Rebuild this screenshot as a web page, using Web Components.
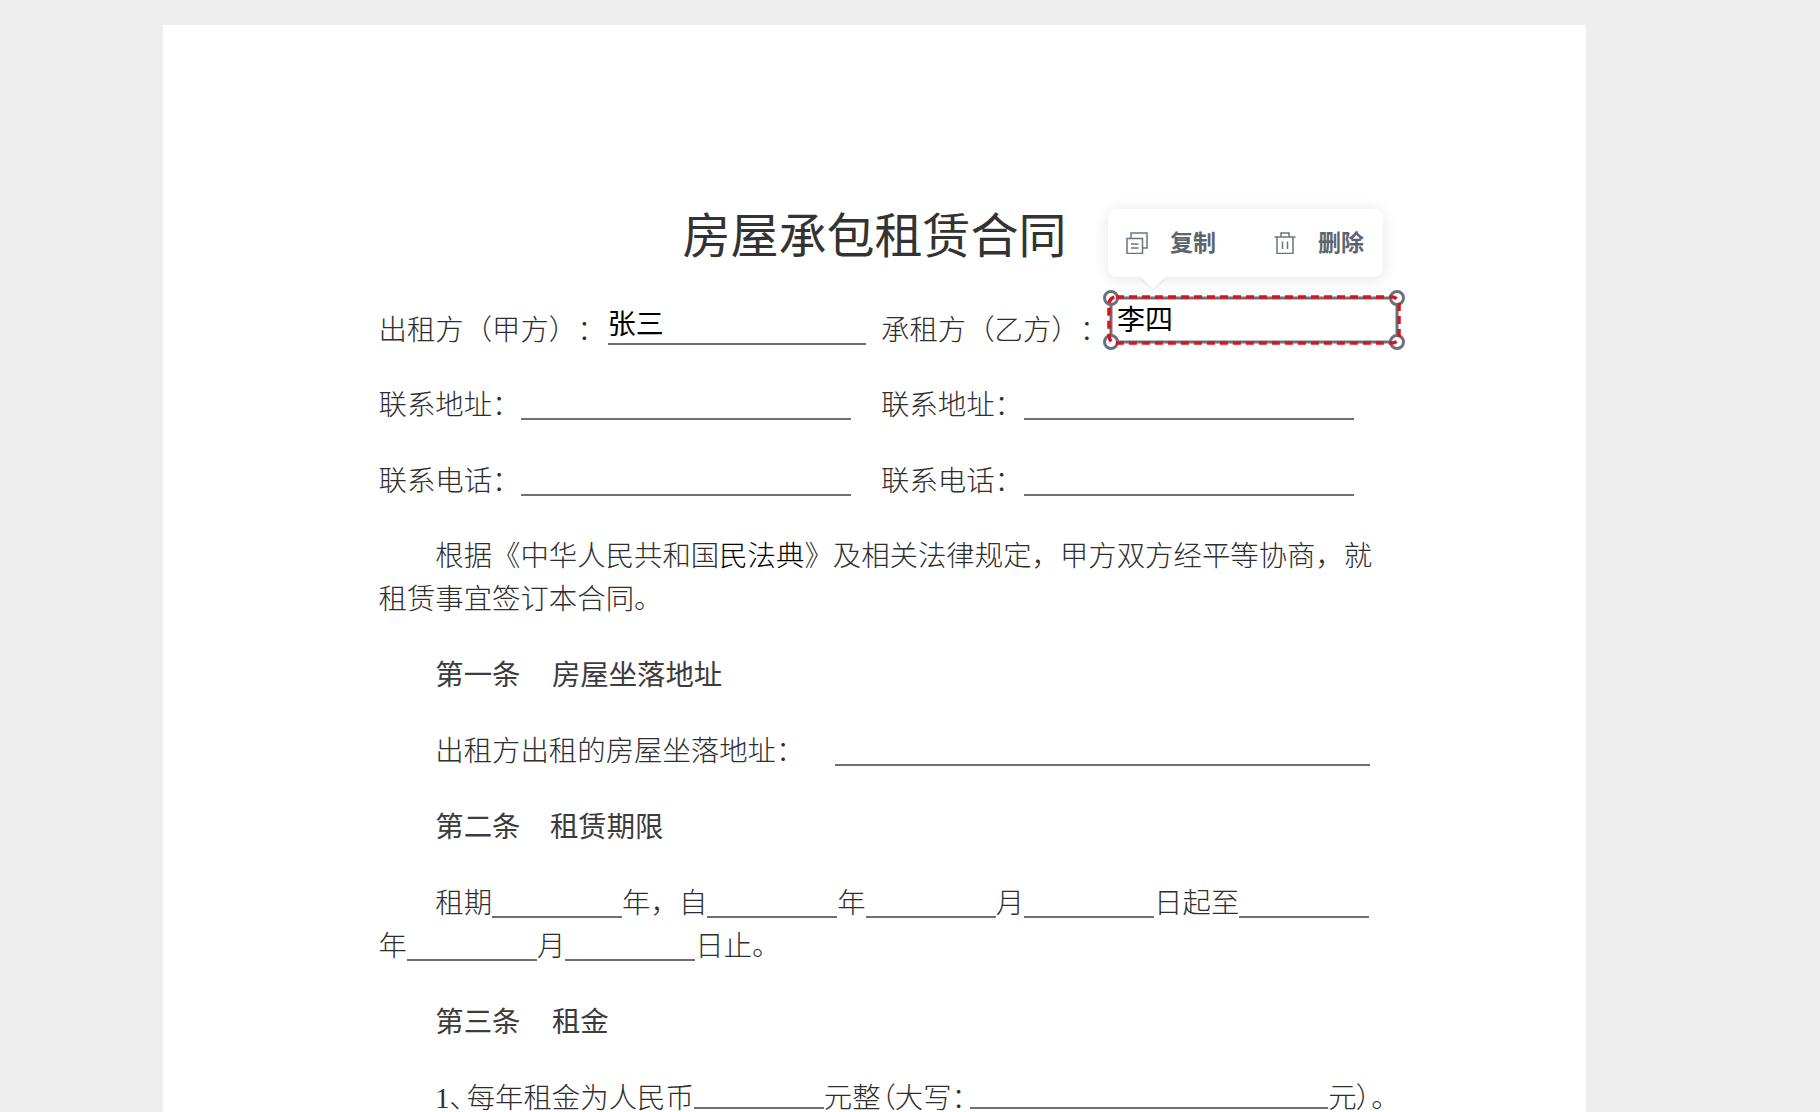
<!DOCTYPE html>
<html lang="zh-CN">
<head>
<meta charset="utf-8">
<title>房屋承包租赁合同</title>
<style>
  html, body { margin: 0; height: 1112px; overflow: hidden; background: #eeeeee; }
</style>
</head>
<body>
<doc-page>
  <doc-title>房屋承包租赁合同</doc-title>

  <doc-row>
    <span>出租方（甲方）：<blank-line w="258" style="margin-left:2px"><b slot="value">张三</b></blank-line></span>
    <span>承租方（乙方）：</span>
  </doc-row>
  <doc-row>
    <span>联系地址：<blank-line w="330" style="margin-left:1px"></blank-line></span>
    <span>联系地址：<blank-line w="330" style="margin-left:1px"></blank-line></span>
  </doc-row>
  <doc-row last>
    <span>联系电话：<blank-line w="330" style="margin-left:1px"></blank-line></span>
    <span>联系电话：<blank-line w="330" style="margin-left:1px"></blank-line></span>
  </doc-row>

  <doc-para indent>根据《中华人民共和国<span class="dark">民法典</span>》及相关法律规定，甲方双方经平等协商，就<br>租赁事宜签订本合同。</doc-para>
  <doc-para indent heading>第一条　<span style="margin-left:3px">房屋坐落地址</span></doc-para>
  <doc-para indent>出租方出租的房屋坐落地址：<blank-line w="535" style="margin-left:31px"></blank-line></doc-para>
  <doc-para indent heading>第二条　<span style="margin-left:1px">租赁期限</span></doc-para>
  <doc-para indent>租期<blank-line w="130"></blank-line>年，自<blank-line w="130"></blank-line>年<blank-line w="130"></blank-line>月<blank-line w="130"></blank-line>日起至<blank-line w="130"></blank-line>年<blank-line w="130"></blank-line>月<blank-line w="130"></blank-line>日止。</doc-para>
  <doc-para indent heading>第三条　<span style="margin-left:3px">租金</span></doc-para>
  <doc-para indent nowrap><span style="font-feature-settings:'palt';padding-right:3px">1、</span>每年租金为人民币<blank-line w="130" style="margin-bottom:-1.5px"></blank-line><span style="font-feature-settings:'palt'">元整（大写：</span><blank-line w="358" style="margin:0 0 -1.5px 4.5px"></blank-line><span style="font-feature-settings:'palt'">元）。</span></doc-para>

  <field-toolbar slot="overlay"></field-toolbar>
  <sign-field slot="overlay">李四</sign-field>
</doc-page>

<script>
// paper sheet, the overlay slot holds what floats above the text
class DocPage extends HTMLElement {
  constructor() {
    super();
    this.attachShadow({ mode: 'open' });
    this.shadowRoot.innerHTML = `
      <style>
        :host {
          display: block;
          position: relative;
          box-sizing: border-box;
          width: 1423px;
          height: 1087px;
          margin: 25px 0 0 163px;
          padding: 186.500px 0 0 215.500px;
          background: #fff;
          overflow: hidden;
          color: #2e2e2e;
          font-family: "Liberation Serif", "Noto Sans CJK SC", serif;
          font-size: 28.4px;
          font-weight: 300;
          text-spacing-trim: space-all;
        }
      </style>
      <slot></slot>
      <slot name="overlay"></slot>
    `;
  }
}

class DocTitle extends HTMLElement {
  constructor() {
    super();
    this.attachShadow({ mode: 'open' });
    this.shadowRoot.innerHTML = `
      <style>
        :host {
          display: block;
          width: 994px;
          margin-left: -1px;
          text-align: center;
          color: #333;
          font-size: 48px;
          font-weight: 400;
          line-height: 50px;
          margin-bottom: 48px;
        }
      </style>
      <slot></slot>
    `;
  }
}

class DocRow extends HTMLElement {
  constructor() {
    super();
    this.attachShadow({ mode: 'open' });
    this.shadowRoot.innerHTML = `
      <style>
        :host {
          display: grid;
          grid-template-columns: 502.5px 1fr;
          width: 1000px;
          line-height: 42.6px;
          margin-bottom: 33.4px;
          white-space: nowrap;
        }
        :host([last]) { margin-bottom: 32.4px; }
      </style>
      <slot></slot>
    `;
  }
}

class DocPara extends HTMLElement {
  constructor() {
    super();
    this.attachShadow({ mode: 'open' });
    this.shadowRoot.innerHTML = `
      <style>
        :host {
          display: block;
          width: 994px;
          line-height: 42.6px;
          margin-bottom: 33.4px;
        }
        :host([indent]) { text-indent: 2em; }
        /* the last line stops at the window edge, keep its box inside */
        :host([nowrap]) { white-space: nowrap; line-height: 30px; padding-top: 6px; margin: 0; }
        :host([heading]) { font-weight: 400; color: #3c3c3c; }
        ::slotted(.dark) { color: #000; }
      </style>
      <slot></slot>
    `;
  }
}

// the underscore blank of the contract, can carry a filled in value
class BlankLine extends HTMLElement {
  static get observedAttributes() {
    return ['w'];
  }

  constructor() {
    super();
    this.attachShadow({ mode: 'open' });
    this.shadowRoot.innerHTML = `
      <style>
        :host {
          display: inline-block;
          position: relative;
          box-sizing: border-box;
          height: 2px;
          margin-bottom: -5px;
          text-indent: 0;
          background: #707070;
        }
        ::slotted(b) {
          position: absolute;
          left: 0;
          bottom: 5px;
          color: #000;
          font: 400 28px/36px "Noto Sans CJK SC", sans-serif;
        }
      </style>
      <slot name="value"></slot>
    `;
  }

  attributeChangedCallback(name, oldValue, newValue) {
    if (name === 'w') {
      this.style.width = newValue + 'px';
    }
  }
}

class FieldToolbar extends HTMLElement {
  constructor() {
    super();
    this.attachShadow({ mode: 'open' });
    this.shadowRoot.innerHTML = `
      <style>
        :host {
          display: flex;
          position: absolute;
          left: 945px;
          top: 184px;
          width: 275px;
          height: 68px;
          box-sizing: border-box;
          padding: 0 19px 0 18px;
          align-items: center;
          justify-content: space-between;
          background: #fff;
          border-radius: 9px;
          box-shadow: 0 2px 16px rgba(0,0,0,.11);
          color: #5b6570;
          font: 700 23px/1 "Noto Sans CJK SC", sans-serif;
        }
        :host::after {
          content: "";
          position: absolute;
          left: 33px;
          bottom: -12px;
          width: 0;
          height: 0;
          border: 12px solid transparent;
          border-bottom: 0;
          border-top-color: #fff;
          filter: drop-shadow(0 2px 1px rgba(0,0,0,.06));
        }
        .action { display: flex; align-items: center; gap: 22px; }
        .action span { margin-top: -3px; }
        svg { display: block; fill: none; stroke: #6b7580; stroke-width: 1.5; }
      </style>
      <div class="action">
        <svg width="22" height="22" viewBox="0 0 22 22">
          <path d="M1 6.500h15.500v15h-15.500z"/>
          <path d="M5 6.500v-5.500h16v15h-4.500"/>
          <path d="M5 12h7.500M5 16h7.500"/>
        </svg>
        <span>复制</span>
      </div>
      <div class="action">
        <svg width="22" height="22" viewBox="0 0 22 22">
          <path d="M0.500 5h21"/>
          <path d="M7 5v-4h8v4"/>
          <path d="M3 5v16.500h16v-16.500"/>
          <path d="M8.500 9.500v7.500M13.500 9.500v7.500"/>
        </svg>
        <span>删除</span>
      </div>
    `;
  }
}

// selected signature box: dashed outline, grey frame, corner handles
class SignField extends HTMLElement {
  constructor() {
    super();
    this.attachShadow({ mode: 'open' });
    this.shadowRoot.innerHTML = `
      <style>
        :host {
          display: block;
          position: absolute;
          left: 946px;
          top: 271px;
          width: 290px;
          height: 48px;
          box-sizing: border-box;
          padding-left: 8px;
          color: #000;
          font: 400 28px/44px "Noto Sans CJK SC", sans-serif;
        }
        svg { position: absolute; left: 0; top: 0; overflow: visible; }
        .frame { fill: none; stroke: #69727c; stroke-width: 3; }
        .handle { fill: #fff; stroke: #69727c; stroke-width: 3; }
        .dash { fill: none; stroke: #d9141e; stroke-width: 3.5; stroke-dasharray: 8 5; }
      </style>
      <svg width="290" height="48" viewBox="0 0 290 48">
        <rect class="frame" x="2" y="2" width="286" height="44"/>
        <circle class="handle" cx="2" cy="2" r="6.500"/>
        <circle class="handle" cx="288" cy="2" r="6.500"/>
        <circle class="handle" cx="2" cy="46" r="6.500"/>
        <circle class="handle" cx="288" cy="46" r="6.500"/>
        <rect class="dash" x="0" y="1" width="290" height="46" rx="7"/>
      </svg>
      <slot></slot>
    `;
  }
}

customElements.define('doc-page', DocPage);
customElements.define('doc-title', DocTitle);
customElements.define('doc-row', DocRow);
customElements.define('doc-para', DocPara);
customElements.define('blank-line', BlankLine);
customElements.define('field-toolbar', FieldToolbar);
customElements.define('sign-field', SignField);
</script>
</body>
</html>
